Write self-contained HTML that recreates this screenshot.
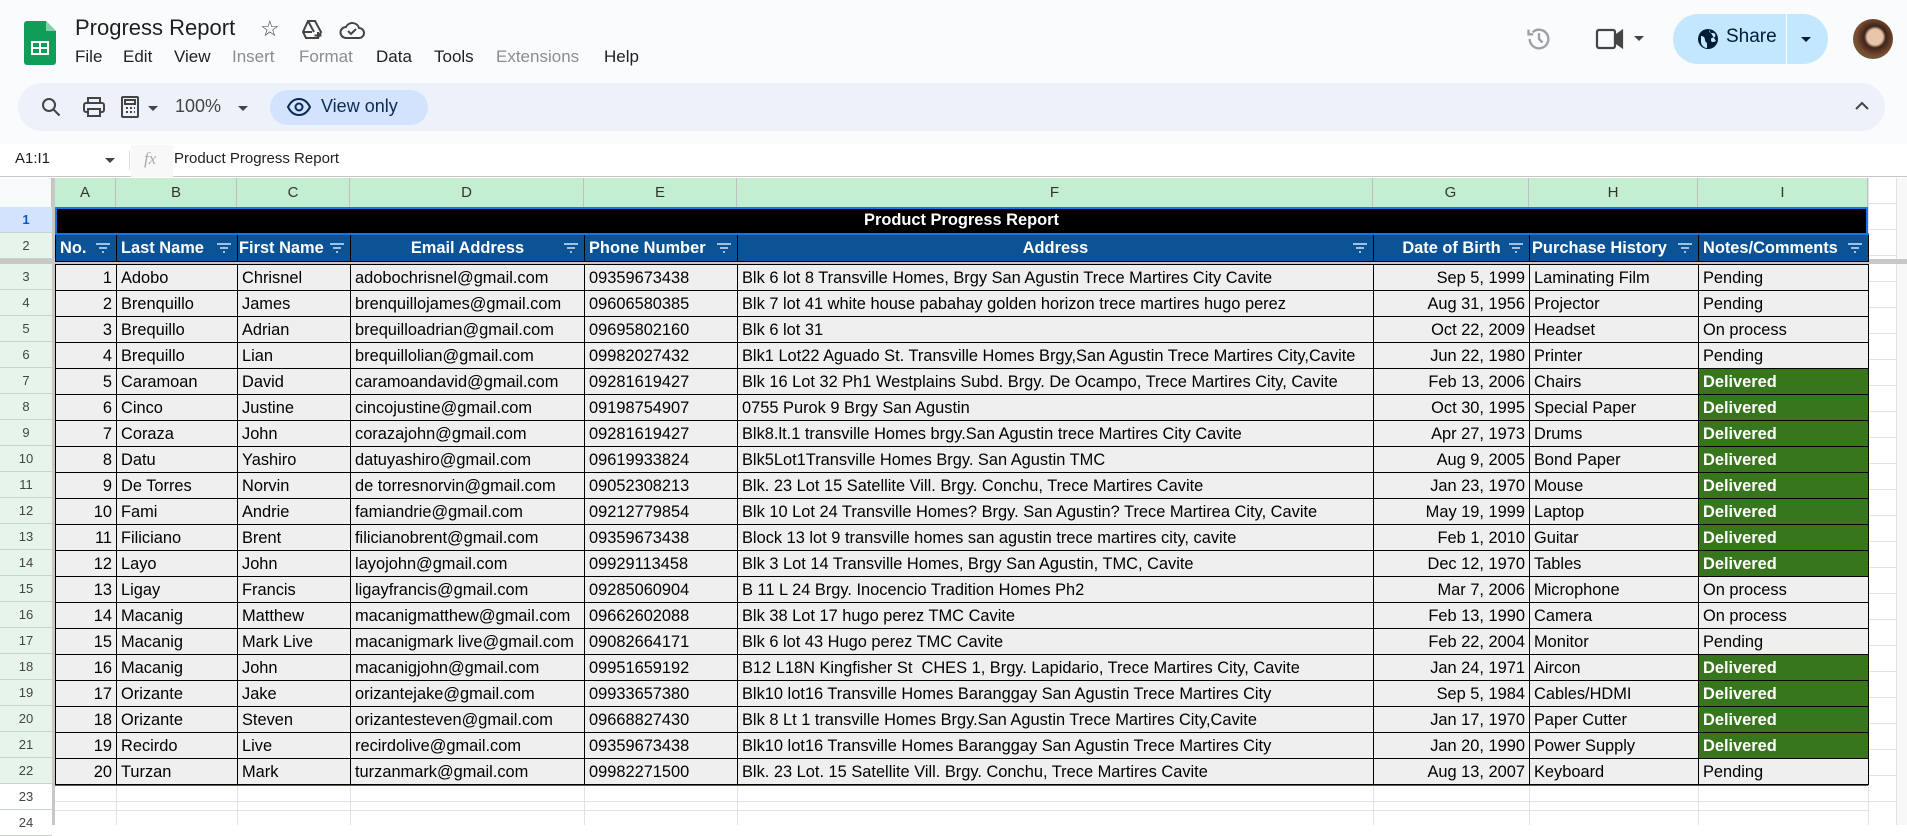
<!DOCTYPE html>
<html><head><meta charset="utf-8">
<style>
*{box-sizing:border-box;margin:0;padding:0}
body{width:1907px;height:825px;overflow:hidden;background:#fff;font-family:"Liberation Sans",Arial,sans-serif;position:relative;color:#000}
.abs{position:absolute}
.top{left:0;top:0;width:1907px;height:144px;background:#f9fbfd}
.menu span{position:absolute;top:47px;font-size:17px;color:#1f1f1f}
.menu span.g{color:#8a8d91}
.pill{left:18px;top:83px;width:1867px;height:48px;background:#edf2fa;border-radius:24px}
table{border-collapse:collapse;table-layout:fixed;position:absolute;left:55px;font-size:16.4px}
td{border:1px solid #000;height:26px;padding:0 4px;white-space:nowrap;overflow:hidden;background:#efefef;line-height:24px}
td.r{text-align:right}
td.d{background:#38761d;color:#fff;font-weight:bold}
.hd td{background:#0b5394;color:#fff;font-weight:bold;height:27px;position:relative}
.fl{position:absolute;right:6px;top:8px;width:14px;height:10px}
.colh{top:178px;height:29px;background:#c4eed0;border-right:1px solid #c0c0c0;font-size:15px;color:#333;text-align:center;line-height:29px}
.rowh{left:0;width:52px;height:26px;background:#e6f4ea;border-bottom:1px solid #c8d3cb;font-size:13px;color:#444;text-align:center;line-height:26px}
</style></head><body>
<div class="abs top"></div>
<!-- logo -->
<svg class="abs" style="left:24px;top:21px" width="32" height="44" viewBox="0 0 32 44"><path d="M3 0h19l10 10v31a3 3 0 0 1-3 3H3a3 3 0 0 1-3-3V3a3 3 0 0 1 3-3z" fill="#0f9d58"/><path d="M22 0v10h10z" fill="#87ceac"/><rect x="7" y="20" width="18" height="14" fill="#fff"/><rect x="9" y="22" width="6" height="4" fill="#0f9d58"/><rect x="17" y="22" width="6" height="4" fill="#0f9d58"/><rect x="9" y="28" width="6" height="4" fill="#0f9d58"/><rect x="17" y="28" width="6" height="4" fill="#0f9d58"/></svg>
<div class="abs" style="left:75px;top:15px;font-size:22px;color:#1f1f1f">Progress Report</div>
<div class="abs" style="left:260px;top:16px;font-size:22px;color:#444">☆</div>
<svg class="abs" style="left:300px;top:18px" width="24" height="24" viewBox="0 0 24 24" fill="none" stroke="#444" stroke-width="2"><path d="M8 3h7l6 11-3 6H6l-3-6z M8 3l6 11 M3 14h9"/><path d="M18 14v7 M14.5 17.5h7"/></svg>
<svg class="abs" style="left:339px;top:19px" width="26" height="22" viewBox="0 0 26 22" fill="none" stroke="#444" stroke-width="2"><path d="M7 19h13a5 5 0 0 0 0-10 7 7 0 0 0-13-1 5.5 5.5 0 0 0 0 11z"/><path d="M9 12l3 3 5-5"/></svg>
<div class="menu">
<span style="left:75px">File</span><span style="left:123px">Edit</span><span style="left:174px">View</span><span class="g" style="left:232px">Insert</span><span class="g" style="left:299px">Format</span><span style="left:376px">Data</span><span style="left:434px">Tools</span><span class="g" style="left:496px">Extensions</span><span style="left:604px">Help</span>
</div>
<!-- right top -->
<svg class="abs" style="left:1525px;top:25px" width="28" height="28" viewBox="0 0 24 24" fill="none" stroke="#9aa0a6" stroke-width="2"><path d="M4 12a8 8 0 1 0 2.5-5.8"/><path d="M3 4v4h4"/><path d="M12 7v5l3 3"/></svg>
<svg class="abs" style="left:1595px;top:27px" width="30" height="24" viewBox="0 0 30 24" fill="none" stroke="#444" stroke-width="2.2"><rect x="2" y="3" width="18" height="18" rx="2"/><path d="M20 9l7-5v16l-7-5z" fill="#444"/></svg>
<div class="abs" style="left:1634px;top:36px;border-left:5px solid transparent;border-right:5px solid transparent;border-top:5px solid #444"></div>
<div class="abs" style="left:1673px;top:14px;width:155px;height:50px;background:#c2e7ff;border-radius:25px"></div>
<div class="abs" style="left:1786px;top:14px;width:1px;height:50px;background:#fff"></div>
<svg class="abs" style="left:1697px;top:28px" width="22" height="22" viewBox="0 0 22 22"><circle cx="11" cy="11" r="10" fill="#001d35"/><path d="M4 8c3 0 4 2 4 4s2 2 2 4v4c-3 0-6-3-6-6z M12 2c0 3 2 3 4 3s3 2 2 4c-2 1-4 0-4 3s3 2 5 1" fill="#c2e7ff"/></svg>
<div class="abs" style="left:1726px;top:26px;font-size:19px;color:#001d35">Share</div>
<div class="abs" style="left:1801px;top:37px;border-left:5px solid transparent;border-right:5px solid transparent;border-top:5px solid #001d35"></div>
<div class="abs" style="left:1853px;top:19px;width:40px;height:40px;border-radius:50%;background:radial-gradient(circle at 55% 45%,#e8c4a8 0 25%,#3a2418 35%,#7a4a30 60%,#5a6a3a 80%)"></div>
<!-- toolbar -->
<div class="abs pill"></div>
<svg class="abs" style="left:41px;top:97px" width="20" height="20" viewBox="0 0 20 20" fill="none" stroke="#444" stroke-width="2"><circle cx="8" cy="8" r="6"/><path d="M12.5 12.5l6 6"/></svg>
<svg class="abs" style="left:83px;top:97px" width="22" height="20" viewBox="0 0 22 20" fill="none" stroke="#444" stroke-width="2"><rect x="5" y="1" width="12" height="5"/><rect x="1" y="6" width="20" height="9" rx="2"/><rect x="5" y="12" width="12" height="7" fill="#edf2fa"/></svg>
<svg class="abs" style="left:121px;top:96px" width="20" height="22" viewBox="0 0 20 22" fill="none" stroke="#444" stroke-width="2"><rect x="1" y="1" width="16" height="20" rx="1"/><rect x="4" y="4" width="10" height="4"/><path d="M5 12h2M9 12h2M13 12h1M5 16h2M9 16h2M13 16h1"/></svg>
<div class="abs" style="left:148px;top:106px;border-left:5px solid transparent;border-right:5px solid transparent;border-top:5px solid #444"></div>
<div class="abs" style="left:175px;top:96px;font-size:18px;color:#444">100%</div>
<div class="abs" style="left:238px;top:106px;border-left:5px solid transparent;border-right:5px solid transparent;border-top:5px solid #444"></div>
<div class="abs" style="left:270px;top:90px;width:158px;height:35px;background:#d3e3fd;border-radius:18px"></div>
<svg class="abs" style="left:287px;top:98px" width="24" height="18" viewBox="0 0 24 18" fill="none" stroke="#0b2a55" stroke-width="2"><path d="M1 9c3-6 7-8 11-8s8 2 11 8c-3 6-7 8-11 8S4 15 1 9z"/><circle cx="12" cy="9" r="3.5"/></svg>
<div class="abs" style="left:321px;top:96px;font-size:18px;color:#0b2a55">View only</div>
<svg class="abs" style="left:1855px;top:101px" width="14" height="9" viewBox="0 0 14 9" fill="none" stroke="#444" stroke-width="2"><path d="M1 8l6-6 6 6"/></svg>
<!-- formula bar -->
<div class="abs" style="left:0;top:144px;width:1907px;height:33px;background:#fff;border-bottom:1px solid #c7c7c7"></div>
<div class="abs" style="left:15px;top:150px;font-size:15px;color:#1f1f1f">A1:I1</div>
<div class="abs" style="left:105px;top:158px;border-left:5px solid transparent;border-right:5px solid transparent;border-top:5px solid #444"></div>
<div class="abs" style="left:129px;top:150px;width:1px;height:20px;background:#ddd"></div>
<div class="abs" style="left:131px;top:145px;width:42px;height:32px;background:#f8f8f8"></div>
<div class="abs" style="left:144px;top:149px;font-size:17px;font-style:italic;color:#aaa;font-family:'Liberation Serif',serif">fx</div>
<div class="abs" style="left:174px;top:150px;font-size:15px;color:#1f1f1f">Product Progress Report</div>
<!-- grid background lines beyond -->
<div class="abs" style="left:0;top:178px;width:1907px;height:647px;background:
repeating-linear-gradient(to bottom,transparent 0 25px,#e2e2e2 25px 26px)"></div>
<div class="abs" style="left:1868px;top:178px;width:1px;height:647px;background:#e2e2e2"></div>
<div class="abs" style="left:1896px;top:178px;width:11px;height:647px;background:#f8f8f8;border-left:1px solid #e2e2e2"></div>
<!-- column headers -->
<div class="abs" style="left:0;top:178px;width:55px;height:29px;background:#f8f9fa;border-right:4px solid #c0c0c0"></div>
<div class="abs colh" style="left:55px;width:61px">A</div>
<div class="abs colh" style="left:116px;width:121px">B</div>
<div class="abs colh" style="left:237px;width:113px">C</div>
<div class="abs colh" style="left:350px;width:234px">D</div>
<div class="abs colh" style="left:584px;width:153px">E</div>
<div class="abs colh" style="left:737px;width:636px">F</div>
<div class="abs colh" style="left:1373px;width:156px">G</div>
<div class="abs colh" style="left:1529px;width:169px">H</div>
<div class="abs colh" style="left:1698px;width:170px">I</div>
<!-- row headers -->
<div class="abs rowh" style="top:207px;background:#d3e3fd;color:#0b57d0;font-weight:bold">1</div>
<div class="abs rowh" style="top:233px">2</div>
<div class="abs" style="left:0;top:259px;width:1907px;height:5px;background:#c8c8c8"></div>
<div class="abs" style="left:52px;top:178px;width:3px;height:647px;background:#c8c8c8"></div>
<div id="rh"></div>
<div class="abs rowh" style="top:264px">3</div><div class="abs rowh" style="top:290px">4</div><div class="abs rowh" style="top:316px">5</div><div class="abs rowh" style="top:342px">6</div><div class="abs rowh" style="top:368px">7</div><div class="abs rowh" style="top:394px">8</div><div class="abs rowh" style="top:420px">9</div><div class="abs rowh" style="top:446px">10</div><div class="abs rowh" style="top:472px">11</div><div class="abs rowh" style="top:498px">12</div><div class="abs rowh" style="top:524px">13</div><div class="abs rowh" style="top:550px">14</div><div class="abs rowh" style="top:576px">15</div><div class="abs rowh" style="top:602px">16</div><div class="abs rowh" style="top:628px">17</div><div class="abs rowh" style="top:654px">18</div><div class="abs rowh" style="top:680px">19</div><div class="abs rowh" style="top:706px">20</div><div class="abs rowh" style="top:732px">21</div><div class="abs rowh" style="top:758px">22</div>
<div class="abs rowh" style="top:784px;background:#fff">23</div><div class="abs rowh" style="top:810px;background:#fff">24</div>
<!-- vertical light lines below -->
<div class="abs" style="left:55px;top:785px;width:1813px;height:40px;background:linear-gradient(#e2e2e2,#e2e2e2) 61px 0/1px 100% no-repeat,linear-gradient(#e2e2e2,#e2e2e2) 182px 0/1px 100% no-repeat,linear-gradient(#e2e2e2,#e2e2e2) 295px 0/1px 100% no-repeat,linear-gradient(#e2e2e2,#e2e2e2) 529px 0/1px 100% no-repeat,linear-gradient(#e2e2e2,#e2e2e2) 682px 0/1px 100% no-repeat,linear-gradient(#e2e2e2,#e2e2e2) 1318px 0/1px 100% no-repeat,linear-gradient(#e2e2e2,#e2e2e2) 1474px 0/1px 100% no-repeat,linear-gradient(#e2e2e2,#e2e2e2) 1643px 0/1px 100% no-repeat,repeating-linear-gradient(to bottom,transparent 0 25px,#e2e2e2 25px 26px)"></div>
<div class="abs" style="left:55px;top:784px;width:1813px;height:2px;background:#188038"></div>
<!-- title rows -->
<div class="abs" style="left:55px;top:207px;width:1813px;height:26px;background:#000;border:2px solid #1a73e8;border-bottom:none;color:#fff;font-weight:bold;font-size:16.4px;text-align:center;line-height:23px">Product Progress Report</div>
<svg width="0" height="0" style="position:absolute"><defs><symbol id="f" viewBox="0 0 14 10"><path d="M0 1h14M3 5h8M6 9h2" stroke="#9fc0e0" stroke-width="2"/></symbol></defs></svg>
<table style="top:233px;border-top:2px solid #1a73e8">
<colgroup><col style="width:61px"><col style="width:121px"><col style="width:113px"><col style="width:234px"><col style="width:153px"><col style="width:636px"><col style="width:156px"><col style="width:169px"><col style="width:170px"></colgroup>
<tr class="hd"><td>No.<svg class="fl"><use href="#f"/></svg></td><td>Last Name<svg class="fl"><use href="#f"/></svg></td><td style="padding-left:1px">First Name<svg class="fl"><use href="#f"/></svg></td><td style="text-align:center">Email Address<svg class="fl"><use href="#f"/></svg></td><td>Phone Number<svg class="fl"><use href="#f"/></svg></td><td style="text-align:center">Address<svg class="fl"><use href="#f"/></svg></td><td style="text-align:center">Date of Birth<svg class="fl"><use href="#f"/></svg></td><td style="padding-left:2px">Purchase History<svg class="fl"><use href="#f"/></svg></td><td>Notes/Comments<svg class="fl"><use href="#f"/></svg></td></tr>
</table>
<table style="top:264px">
<colgroup><col style="width:61px"><col style="width:121px"><col style="width:113px"><col style="width:234px"><col style="width:153px"><col style="width:636px"><col style="width:156px"><col style="width:169px"><col style="width:170px"></colgroup>
<tr><td class="r">1</td><td>Adobo</td><td>Chrisnel</td><td>adobochrisnel@gmail.com</td><td>09359673438</td><td>Blk 6 lot 8 Transville Homes, Brgy San Agustin Trece Martires City Cavite</td><td class="r">Sep 5, 1999</td><td>Laminating Film</td><td>Pending</td></tr>
<tr><td class="r">2</td><td>Brenquillo</td><td>James</td><td>brenquillojames@gmail.com</td><td>09606580385</td><td>Blk 7 lot 41 white house pabahay golden horizon trece martires hugo perez</td><td class="r">Aug 31, 1956</td><td>Projector</td><td>Pending</td></tr>
<tr><td class="r">3</td><td>Brequillo</td><td>Adrian</td><td>brequilloadrian@gmail.com</td><td>09695802160</td><td>Blk 6 lot 31</td><td class="r">Oct 22, 2009</td><td>Headset</td><td>On process</td></tr>
<tr><td class="r">4</td><td>Brequillo</td><td>Lian</td><td>brequillolian@gmail.com</td><td>09982027432</td><td>Blk1 Lot22 Aguado St. Transville Homes Brgy,San Agustin Trece Martires City,Cavite</td><td class="r">Jun 22, 1980</td><td>Printer</td><td>Pending</td></tr>
<tr><td class="r">5</td><td>Caramoan</td><td>David</td><td>caramoandavid@gmail.com</td><td>09281619427</td><td>Blk 16 Lot 32 Ph1 Westplains Subd. Brgy. De Ocampo, Trece Martires City, Cavite</td><td class="r">Feb 13, 2006</td><td>Chairs</td><td class="d">Delivered</td></tr>
<tr><td class="r">6</td><td>Cinco</td><td>Justine</td><td>cincojustine@gmail.com</td><td>09198754907</td><td>0755 Purok 9 Brgy San Agustin</td><td class="r">Oct 30, 1995</td><td>Special Paper</td><td class="d">Delivered</td></tr>
<tr><td class="r">7</td><td>Coraza</td><td>John</td><td>corazajohn@gmail.com</td><td>09281619427</td><td>Blk8.lt.1 transville Homes brgy.San Agustin trece Martires City Cavite</td><td class="r">Apr 27, 1973</td><td>Drums</td><td class="d">Delivered</td></tr>
<tr><td class="r">8</td><td>Datu</td><td>Yashiro</td><td>datuyashiro@gmail.com</td><td>09619933824</td><td>Blk5Lot1Transville Homes Brgy. San Agustin TMC</td><td class="r">Aug 9, 2005</td><td>Bond Paper</td><td class="d">Delivered</td></tr>
<tr><td class="r">9</td><td>De Torres</td><td>Norvin</td><td>de torresnorvin@gmail.com</td><td>09052308213</td><td>Blk. 23 Lot 15 Satellite Vill. Brgy. Conchu, Trece Martires Cavite</td><td class="r">Jan 23, 1970</td><td>Mouse</td><td class="d">Delivered</td></tr>
<tr><td class="r">10</td><td>Fami</td><td>Andrie</td><td>famiandrie@gmail.com</td><td>09212779854</td><td>Blk 10 Lot 24 Transville Homes? Brgy. San Agustin? Trece Martirea City, Cavite</td><td class="r">May 19, 1999</td><td>Laptop</td><td class="d">Delivered</td></tr>
<tr><td class="r">11</td><td>Filiciano</td><td>Brent</td><td>filicianobrent@gmail.com</td><td>09359673438</td><td>Block 13 lot 9 transville homes san agustin trece martires city, cavite</td><td class="r">Feb 1, 2010</td><td>Guitar</td><td class="d">Delivered</td></tr>
<tr><td class="r">12</td><td>Layo</td><td>John</td><td>layojohn@gmail.com</td><td>09929113458</td><td>Blk 3 Lot 14 Transville Homes, Brgy San Agustin, TMC, Cavite</td><td class="r">Dec 12, 1970</td><td>Tables</td><td class="d">Delivered</td></tr>
<tr><td class="r">13</td><td>Ligay</td><td>Francis</td><td>ligayfrancis@gmail.com</td><td>09285060904</td><td>B 11 L 24 Brgy. Inocencio Tradition Homes Ph2</td><td class="r">Mar 7, 2006</td><td>Microphone</td><td>On process</td></tr>
<tr><td class="r">14</td><td>Macanig</td><td>Matthew</td><td>macanigmatthew@gmail.com</td><td>09662602088</td><td>Blk 38 Lot 17 hugo perez TMC Cavite</td><td class="r">Feb 13, 1990</td><td>Camera</td><td>On process</td></tr>
<tr><td class="r">15</td><td>Macanig</td><td>Mark Live</td><td>macanigmark live@gmail.com</td><td>09082664171</td><td>Blk 6 lot 43 Hugo perez TMC Cavite</td><td class="r">Feb 22, 2004</td><td>Monitor</td><td>Pending</td></tr>
<tr><td class="r">16</td><td>Macanig</td><td>John</td><td>macanigjohn@gmail.com</td><td>09951659192</td><td>B12 L18N Kingfisher St&nbsp; CHES 1, Brgy. Lapidario, Trece Martires City, Cavite</td><td class="r">Jan 24, 1971</td><td>Aircon</td><td class="d">Delivered</td></tr>
<tr><td class="r">17</td><td>Orizante</td><td>Jake</td><td>orizantejake@gmail.com</td><td>09933657380</td><td>Blk10 lot16 Transville Homes Baranggay San Agustin Trece Martires City</td><td class="r">Sep 5, 1984</td><td>Cables/HDMI</td><td class="d">Delivered</td></tr>
<tr><td class="r">18</td><td>Orizante</td><td>Steven</td><td>orizantesteven@gmail.com</td><td>09668827430</td><td>Blk 8 Lt 1 transville Homes Brgy.San Agustin Trece Martires City,Cavite</td><td class="r">Jan 17, 1970</td><td>Paper Cutter</td><td class="d">Delivered</td></tr>
<tr><td class="r">19</td><td>Recirdo</td><td>Live</td><td>recirdolive@gmail.com</td><td>09359673438</td><td>Blk10 lot16 Transville Homes Baranggay San Agustin Trece Martires City</td><td class="r">Jan 20, 1990</td><td>Power Supply</td><td class="d">Delivered</td></tr>
<tr><td class="r">20</td><td>Turzan</td><td>Mark</td><td>turzanmark@gmail.com</td><td>09982271500</td><td>Blk. 23 Lot. 15 Satellite Vill. Brgy. Conchu, Trece Martires Cavite</td><td class="r">Aug 13, 2007</td><td>Keyboard</td><td>Pending</td></tr>
</table>
</body></html>
